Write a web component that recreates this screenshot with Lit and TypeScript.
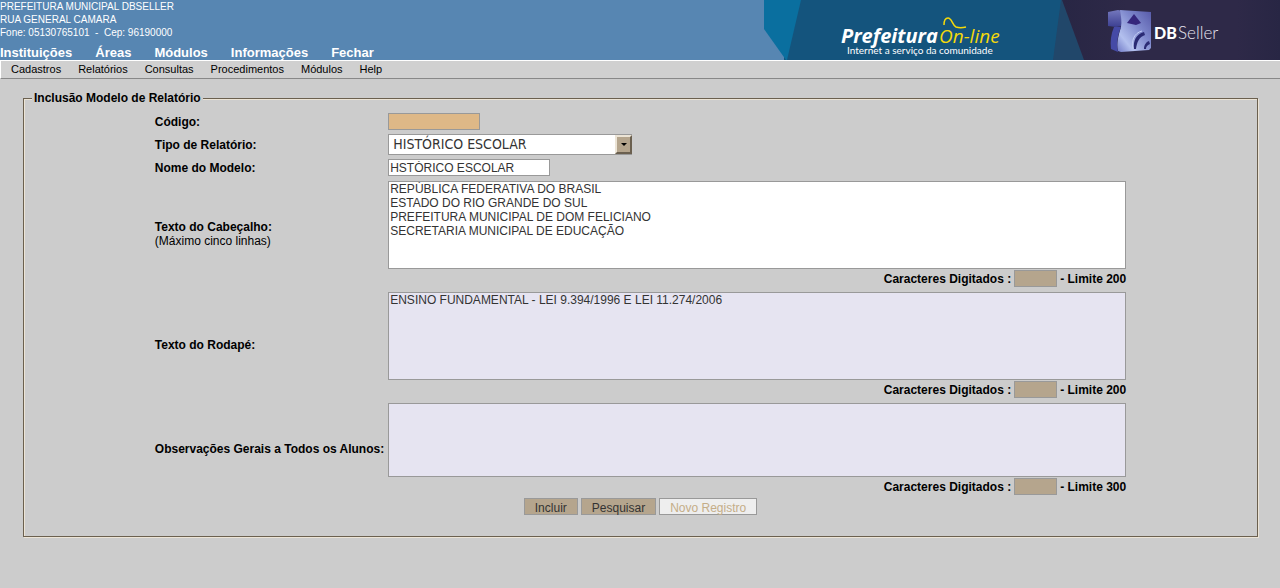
import { LitElement, html, css, svg } from "lit";
import { customElement } from "lit/decorators.js";

const banner = svg`
  <defs>
    <linearGradient id="cubeFace" x1="1" y1="0" x2="0" y2="1">
      <stop offset="0" stop-color="#5659a8" />
      <stop offset="0.4" stop-color="#7f89cd" />
      <stop offset="0.75" stop-color="#b3c0ee" />
      <stop offset="1" stop-color="#6f78c6" />
    </linearGradient>
    <linearGradient id="cubeSide" x1="0" y1="0" x2="0" y2="1">
      <stop offset="0" stop-color="#7478bd" />
      <stop offset="1" stop-color="#3c3f91" />
    </linearGradient>
    <linearGradient id="night" x1="0" y1="0" x2="1" y2="0">
      <stop offset="0" stop-color="#282644" />
      <stop offset="0.3" stop-color="#2e2948" />
      <stop offset="0.8" stop-color="#2e2948" />
      <stop offset="1" stop-color="#282644" />
    </linearGradient>
  </defs>
  <path fill="#14547d" d="M20 0H516V60H20z" />
  <path fill="#0a6f9f" d="M0 0H37L23 60H22L0 29z" />
  <path fill="#21476a" d="M297 0H516V60H289z" />
  <path fill="url(#night)" d="M298 0H516V60H320z" />
  <text class="logo-main" x="77" y="43" font-size="20" font-weight="700" fill="#fff">Prefeitura</text>
  <text class="logo-main" x="175" y="43" font-size="19" fill="#f5d90a">On-line</text>
  <path fill="none" stroke="#f5d90a" stroke-width="1.5" d="M180 25c0-4 1-7 4-7 4 0 4 7 8 9 3 1 6 1 10 0" />
  <text class="logo-sub" x="83" y="54" font-size="10" fill="#fff">Internet a serviço da comunidade</text>
  <path fill="url(#cubeSide)" d="M344 12l10-2 5 1v15l-7 1-8-1z" />
  <path fill="url(#cubeFace)" d="M356 10l31 2v36l-2 2-28 2-3-1c-2-8 1-17 3-24 1-5 0-11-1-17z" />
  <path fill="#454aa6" d="M350 27h7c-3 8-5 16-3 25l-7-3c-1-8 0-15 3-22z" />
  <path fill="#35267c" d="M370 14l7 9-5 2-9-2z" />
  <path fill="#2b2b74" d="M370 49c-1-8 2-15 10-17l1 3c-6 2-8 7-9 14zM380 49c0-4 2-7 5-8l1 3c-3 1-4 3-4 5z" />
  <path fill="none" stroke="#c3cdf5" stroke-width="1" d="M369 49c-2-8 1-16 9-18" />
  <text class="logo-db" x="390" y="39" font-size="16" font-weight="900" fill="#fff">DB</text>
  <text class="logo-db" x="414" y="39" font-size="17" font-weight="300" fill="#e6e4ee">Seller</text>
`;

@customElement("app-root")
export class AppRoot extends LitElement {
  static styles = css`
    :host {
      display: block;
      min-height: 100vh;
      background: #ccc;
      color: #000;
      font: 12px/14px "Liberation Sans", Arial, sans-serif;
    }
    * { box-sizing: border-box; }
    a { color: inherit; text-decoration: none; }
    .top {
      display: flex;
      justify-content: space-between;
      height: 60px;
      background: #5786b2;
      color: #fff;
    }
    .org { font-size: 10px; line-height: 13px; }
    .modules {
      display: flex;
      gap: 23px;
      padding-top: 6px;
      font-size: 13px;
      font-weight: 700;
      line-height: 15px;
    }
    .banner { display: block; flex: none; width: 516px; height: 60px; }
    .logo-main { font-family: "Open Sans", sans-serif; font-style: italic; }
    .logo-sub { font-family: Lato, sans-serif; }
    .logo-db { font-family: Lato, sans-serif; }
    .menu {
      display: flex;
      gap: 17px;
      padding: 1px 10px;
      border-top: 1px solid #fff;
      border-left: 1px solid #fff;
      border-bottom: 1px solid #888;
      background: #d0d0d0;
      font-size: 11px;
      line-height: 15px;
    }
    .panel {
      margin: 13px 22px 0 23px;
      padding: 8px 0 21px;
      border: 1px solid #6b604f;
      box-shadow: inset 1px 1px #ece4d6, 1px 1px #ece4d6;
    }
    .title {
      margin-left: 8px;
      padding: 0 2px;
      background: #ccc;
      font-weight: 700;
      line-height: 13px;
    }
    .form {
      display: grid;
      grid-template-columns: auto minmax(0, 738px);
      justify-content: center;
      align-items: center;
      column-gap: 4px;
      row-gap: 4px;
    }
    .name { font-weight: 700; }
    .note { font-weight: 400; }
    .box, .area, .select, .btn {
      display: block;
      margin: 0;
      border: 1px solid #999;
      border-radius: 0;
      background: #fff;
      color: #333;
      font: 12px/14px "Liberation Sans", Arial, sans-serif;
    }
    .box { height: 17px; padding: 1px 1px 0; }
    .code { width: 92px; background: #deb887; }
    .model { width: 162px; }
    .tally { width: 43px; background: #b5a58d; }
    .pick { display: grid; width: 244px; }
    .select {
      grid-area: 1 / 1;
      appearance: none;
      height: 21px;
      padding: 0 4px;
      font: 14px/19px "DejaVu Sans Condensed", "DejaVu Sans", sans-serif;
    }
    .arrow {
      grid-area: 1 / 1;
      place-self: center end;
      display: grid;
      place-items: center;
      width: 17px;
      height: 19px;
      border: 2px solid;
      border-color: #ece4d6 #6b604f #6b604f #ece4d6;
      background: #b5a58d;
      pointer-events: none;
    }
    .field { padding-top: 1px; }
    .area {
      width: 100%;
      height: 88px;
      padding: 0 1px;
      resize: none;
      overflow: auto;
    }
    .short { height: 74px; }
    .tinted { background: #e6e4f1; }
    .count {
      display: flex;
      justify-content: flex-end;
      align-items: center;
      gap: 3px;
      padding-top: 1px;
      font-weight: 700;
    }
    .actions { display: flex; justify-content: center; gap: 3px; padding-top: 3px; }
    .btn { height: 17px; padding: 2px 10px 0; background: #b5a58d; }
    .btn:disabled { background: #eee; color: #c4ad88; }
  `;

  private block(id: string, label: unknown, text: string, limit: number, style: string) {
    return html`
      <label class="name" for=${id}>${label}</label>
      <div class="field">
        <textarea id=${id} class="area ${style}" spellcheck="false" .value=${text}></textarea>
        <div class="count">
          <label for="${id}-count">Caracteres Digitados :</label>
          <input id="${id}-count" class="box tally" readonly />
          <span>- Limite ${limit}</span>
        </div>
      </div>
    `;
  }

  render() {
    return html`
      <header class="top">
        <div>
          <div class="org">
            <div>PREFEITURA MUNICIPAL DBSELLER</div>
            <div>RUA GENERAL CAMARA</div>
            <div>Fone: 05130765101 &nbsp;-&nbsp; Cep: 96190000</div>
          </div>
          <nav class="modules">
            ${["Instituições", "Áreas", "Módulos", "Informações", "Fechar"].map(
              (t) => html`<a href="#">${t}</a>`
            )}
          </nav>
        </div>
        <svg class="banner" viewBox="0 0 516 60">${banner}</svg>
      </header>
      <nav class="menu">
        ${["Cadastros", "Relatórios", "Consultas", "Procedimentos", "Módulos", "Help"].map(
          (t) => html`<a href="#">${t}</a>`
        )}
      </nav>
      <form @submit=${(e: Event) => e.preventDefault()}>
        <fieldset class="panel">
          <legend class="title">Inclusão Modelo de Relatório</legend>
          <div class="form">
            <label class="name" for="code">Código:</label>
            <input id="code" class="box code" readonly />
            <label class="name" for="kind">Tipo de Relatório:</label>
            <div class="pick">
              <select id="kind" class="select"><option>HISTÓRICO ESCOLAR</option></select>
              <span class="arrow">
                <svg width="6" height="3" viewBox="0 0 6 3"><path d="M0 0h6L3 3z" /></svg>
              </span>
            </div>
            <label class="name" for="model">Nome do Modelo:</label>
            <input id="model" class="box model" .value=${"HSTÓRICO ESCOLAR"} />
            ${this.block(
              "head",
              html`Texto do Cabeçalho:<br /><span class="note">(Máximo cinco linhas)</span>`,
              "REPÚBLICA FEDERATIVA DO BRASIL\nESTADO DO RIO GRANDE DO SUL\nPREFEITURA MUNICIPAL DE DOM FELICIANO\nSECRETARIA MUNICIPAL DE EDUCAÇÃO",
              200,
              ""
            )}
            ${this.block("foot", "Texto do Rodapé:", "ENSINO FUNDAMENTAL - LEI 9.394/1996 E LEI 11.274/2006", 200, "tinted")}
            ${this.block("notes", "Observações Gerais a Todos os Alunos:", "", 300, "tinted short")}
          </div>
          <div class="actions">
            <button class="btn" type="submit">Incluir</button>
            <button class="btn" type="button">Pesquisar</button>
            <button class="btn" type="button" disabled>Novo Registro</button>
          </div>
        </fieldset>
      </form>
    `;
  }
}
